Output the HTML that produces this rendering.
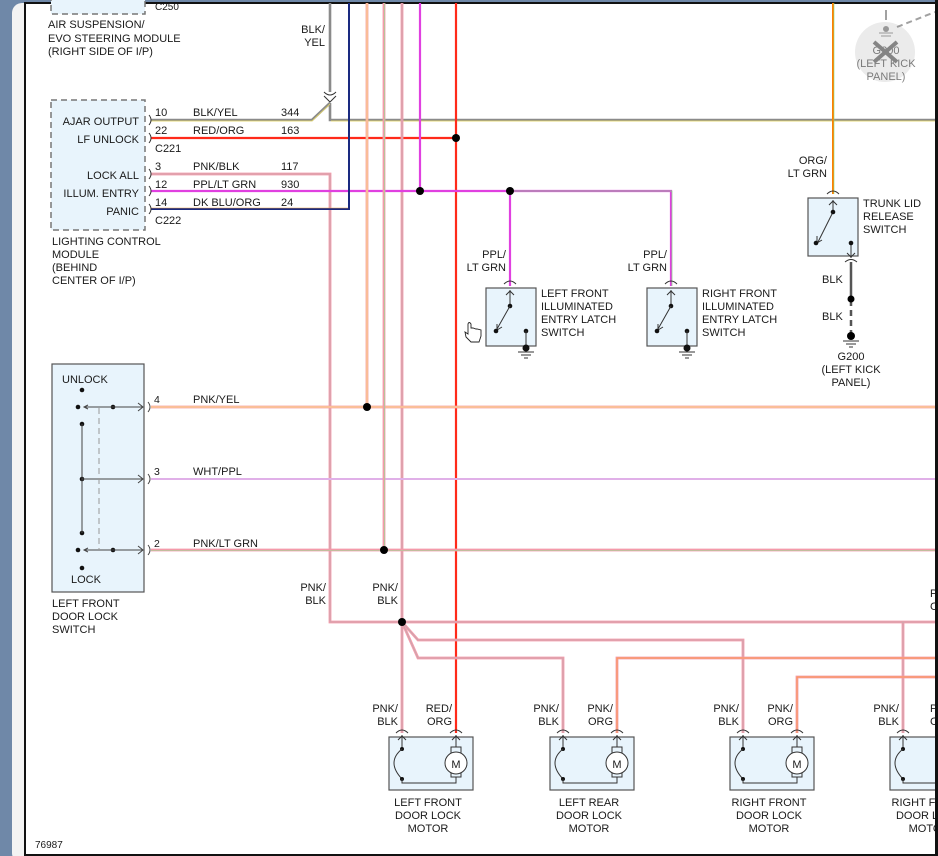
<!DOCTYPE html>
<html><head><meta charset="utf-8"><style>
html,body{margin:0;padding:0;width:938px;height:856px;overflow:hidden;background:#6f88a8;}
svg{position:absolute;left:0;top:0}
text{font-family:"Liberation Sans",Arial,sans-serif;font-size:11px;fill:#1a1a1a}
</style></head><body>
<svg width="938" height="856" viewBox="0 0 938 856" xmlns="http://www.w3.org/2000/svg">
<defs>
<g id="motor">
 <rect x="-13" y="0" width="84" height="53" fill="#e8f4fc" stroke="#555" stroke-width="1.2"/>
 <path d="M-6,-4 Q0,-10 6,-4 M48,-4 Q54,-10 60,-4" fill="none" stroke="#333"/>
 <path d="M0,12 L0,-2 M-4,3 L0,-1 L4,3" fill="none" stroke="#333"/>
 <circle cx="0" cy="12" r="2" fill="#111"/>
 <path d="M0,12 Q-16,25 0,42" fill="none" stroke="#333"/>
 <circle cx="0" cy="42" r="2" fill="#111"/>
 <path d="M0,42 L0,46 L54,46 L54,40" fill="none" stroke="#333"/>
 <path d="M54,10 L54,-2 M50,3 L54,-1 L58,3" fill="none" stroke="#333"/>
 <rect x="49" y="10" width="10" height="30" fill="none" stroke="#333"/>
 <circle cx="54" cy="26" r="11" fill="#fff" stroke="#333"/>
</g>
<g id="sw">
 <rect x="0" y="0" width="50" height="58" fill="#e8f4fc" stroke="#555" stroke-width="1.2"/>
 <path d="M18,-4 Q24,-10 30,-4" fill="none" stroke="#333"/>
 <path d="M24,18 L24,2 M20,7 L24,3 L28,7" fill="none" stroke="#333"/>
 <circle cx="24" cy="18" r="2.3" fill="#111"/>
 <path d="M24,18 L11,41 M11,36 L11,42 L16,39" fill="none" stroke="#333"/>
 <circle cx="10" cy="43" r="2.3" fill="#111"/>
 <circle cx="40" cy="43" r="2.3" fill="#111"/>
 <path d="M40,43 L40,60 M32,64 L48,64 M35,67 L45,67 M38,70 L42,70" fill="none" stroke="#333"/>
 <circle cx="40" cy="60" r="3.5" fill="#111"/>
</g>
</defs>
<rect x="12" y="3" width="930" height="860" rx="10" fill="#f3f3f3"/>
<rect x="25" y="3" width="911" height="852" fill="#fff" stroke="#111" stroke-width="2"/>
<rect x="0" y="0" width="938" height="2" fill="#6f88a8"/>

<rect x="51" y="-5" width="94" height="19" fill="#e8f4fc" stroke="#777" stroke-dasharray="6,4" stroke-width="1.5"/>
<text x="155" y="10" style="font-size:10px">C250</text>
<text x="48" y="28">AIR SUSPENSION/</text>
<text x="48" y="42">EVO STEERING MODULE</text>
<text x="48" y="55">(RIGHT SIDE OF I/P)</text>

<rect x="51" y="100" width="94" height="130" fill="#e8f4fc" stroke="#777" stroke-dasharray="6,4" stroke-width="1.5"/>
<g text-anchor="end">
<text x="139" y="125">AJAR OUTPUT</text>
<text x="139" y="143">LF UNLOCK</text>
<text x="139" y="179">LOCK ALL</text>
<text x="139" y="197">ILLUM. ENTRY</text>
<text x="139" y="215">PANIC</text>
</g>
<text x="52" y="245">LIGHTING CONTROL</text>
<text x="52" y="258">MODULE</text>
<text x="52" y="271">(BEHIND</text>
<text x="52" y="284">CENTER OF I/P)</text>
<g style="font-size:10.5px">
<text x="155" y="116">10</text><text x="193" y="116">BLK/YEL</text><text x="281" y="116">344</text>
<text x="155" y="134">22</text><text x="193" y="134">RED/ORG</text><text x="281" y="134">163</text>
<text x="155" y="152">C221</text>
<text x="155" y="170">3</text><text x="193" y="170">PNK/BLK</text><text x="281" y="170">117</text>
<text x="155" y="188">12</text><text x="193" y="188">PPL/LT GRN</text><text x="281" y="188">930</text>
<text x="155" y="206">14</text><text x="193" y="206">DK BLU/ORG</text><text x="281" y="206">24</text>
<text x="155" y="224">C222</text>
</g>
<text x="325" y="33" text-anchor="end">BLK/</text>
<text x="325" y="46" text-anchor="end">YEL</text>

<g fill="none" stroke-linejoin="miter">
 <path d="M151,120 L312,120 L330,103 M330,3 L330,92 M330,103 L330,120 L935,120" stroke="#8a8a8a" stroke-width="2.6"/>
 <path d="M151,121 L312,121 L330,104 M331,121 L935,121" stroke="#f0e060" stroke-width="0.7"/>
 <path d="M324,96 L330,102 L336,96 M324,92 Q330,98 336,92" stroke="#333" stroke-width="1"/>
 <path d="M151,138 L456,138 M456,3 L456,733" stroke="#ff2a1a" stroke-width="2.2"/>
 <path d="M151,174 L330,174 L330,622 L935,622 M402,3 L402,733 M402,622 L418,640 L743,640 L743,733 M402,622 L418,658 L563,658 L563,733 M903,622 L903,733" stroke="#f49aaa" stroke-width="2.8"/>
 <path d="M151,174 L330,174 L330,622 L935,622 M402,3 L402,733 M402,622 L418,640 L743,640 L743,733 M402,622 L418,658 L563,658 L563,733 M903,622 L903,733" stroke="#b0b0b0" stroke-width="0.6"/>
 <path d="M617,733 L617,658 L935,658 M797,733 L797,677 L935,677" stroke="#f49aaa" stroke-width="2.8"/>
 <path d="M617,733 L617,658 L935,658 M797,733 L797,677 L935,677" stroke="#ff9a30" stroke-width="0.7"/>
 <path d="M151,191 L671,191 L671,286 M420,3 L420,191 M510,191 L510,286" stroke="#e040e0" stroke-width="2.2"/>
 <path d="M511,191 L672,191 L672,286" stroke="#80e080" stroke-width="0.7"/>
 <path d="M151,209 L349,209 L349,3" stroke="#1a2a80" stroke-width="2"/>
 <path d="M151,208 L348,208" stroke="#f0a040" stroke-width="0.6"/>
 <path d="M151,407 L935,407 M367,3 L367,407" stroke="#f6a0a0" stroke-width="2.8"/>
 <path d="M151,407 L935,407 M367,3 L367,407" stroke="#fff08a" stroke-width="0.7"/>
 <path d="M151,479 L935,479" stroke="#e0b0e8" stroke-width="2"/>
 <path d="M151,550 L935,550 M384,3 L384,550" stroke="#f49aaa" stroke-width="2.8"/>
 <path d="M151,550.5 L935,550.5 M384.5,3 L384.5,550" stroke="#90e090" stroke-width="0.6"/>
 <path d="M833,3 L833,194" stroke="#ff8000" stroke-width="2"/>
 <path d="M834,3 L834,194" stroke="#80e080" stroke-width="0.6"/>
 <path d="M851,262 L851,299" stroke="#555" stroke-width="2.5"/>
 <path d="M851,300 L851,336" stroke="#555" stroke-width="2.5" stroke-dasharray="6,4"/>
</g>
<g fill="#000">
<circle cx="456" cy="138" r="4"/><circle cx="420" cy="191" r="4"/><circle cx="510" cy="191" r="4"/>
<circle cx="367" cy="407" r="4"/><circle cx="384" cy="550" r="4"/><circle cx="402" cy="622" r="4"/>
<circle cx="851" cy="299" r="3.5"/><circle cx="851" cy="336" r="4"/>
</g>
<path d="M843,341 L859,341 M846,344 L856,344 M849,347 L853,347" stroke="#333" fill="none"/>
<g fill="none" stroke="#333">
<path d="M149,115 Q153,120 149,125 M149,133 Q153,138 149,143 M149,169 Q153,174 149,179 M149,186 Q153,191 149,196 M149,204 Q153,209 149,214"/>
</g>

<rect x="52" y="364" width="92" height="228" fill="#e8f4fc" stroke="#555" stroke-width="1.2"/>
<text x="62" y="383">UNLOCK</text>
<text x="71" y="583">LOCK</text>
<g fill="#111"><circle cx="82" cy="390" r="2.3"/><circle cx="78" cy="407" r="2.3"/><circle cx="113" cy="407" r="2.3"/>
<circle cx="82" cy="424" r="2.3"/><circle cx="82" cy="479" r="2.3"/><circle cx="82" cy="533" r="2.3"/>
<circle cx="78" cy="550" r="2.3"/><circle cx="113" cy="550" r="2.3"/><circle cx="82" cy="568" r="2.3"/></g>
<g fill="none" stroke="#444">
<path d="M84,407 L143,407 M138,403 L143,407 L138,411 M88,405 L84,407 L88,409"/>
<path d="M84,550 L143,550 M138,546 L143,550 L138,554 M88,548 L84,550 L88,552"/>
<path d="M82,424 L82,533 M82,479 L143,479 M138,475 L143,479 L138,483"/>
<path d="M99,408 L99,550" stroke="#999" stroke-dasharray="6,4"/>
<path d="M148,402 Q152,407 148,412 M148,474 Q152,479 148,484 M148,545 Q152,550 148,555"/>
</g>
<text x="154" y="403" style="font-size:10.5px">4</text><text x="193" y="403">PNK/YEL</text>
<text x="154" y="475" style="font-size:10.5px">3</text><text x="193" y="475">WHT/PPL</text>
<text x="154" y="547" style="font-size:10.5px">2</text><text x="193" y="547">PNK/LT GRN</text>
<text x="52" y="607">LEFT FRONT</text><text x="52" y="620">DOOR LOCK</text><text x="52" y="633">SWITCH</text>
<g text-anchor="end">
<text x="326" y="591">PNK/</text><text x="326" y="604">BLK</text>
<text x="398" y="591">PNK/</text><text x="398" y="604">BLK</text>
</g>

<use href="#sw" x="486" y="288"/>
<use href="#sw" x="647" y="288"/>
<g text-anchor="end">
<text x="506" y="258">PPL/</text><text x="506" y="271">LT GRN</text>
<text x="667" y="258">PPL/</text><text x="667" y="271">LT GRN</text>
<text x="827" y="164">ORG/</text><text x="827" y="177">LT GRN</text>
</g>
<text x="541" y="297">LEFT FRONT</text><text x="541" y="310">ILLUMINATED</text><text x="541" y="323">ENTRY LATCH</text><text x="541" y="336">SWITCH</text>
<text x="702" y="297">RIGHT FRONT</text><text x="702" y="310">ILLUMINATED</text><text x="702" y="323">ENTRY LATCH</text><text x="702" y="336">SWITCH</text>
<path d="M468,324 L468,334 L465,332 L466,337 L471,342 L479,342 L481,336 L481,330 L477,329 L476,329 L473,328 L471,328 L471,324 Q469,321 468,324 Z" fill="#fff" stroke="#222" stroke-width="0.9"/>

<rect x="808" y="198" width="50" height="58" fill="#e8f4fc" stroke="#555" stroke-width="1.2"/>
<g fill="none" stroke="#333">
<path d="M827,194 Q833,188 839,194"/>
<path d="M833,212 L833,200 M829,205 L833,201 L837,205"/>
<path d="M833,212 L818,242 M817,236 L817,243 L822,240"/>
<path d="M851,243 L851,258 M847,253 L851,257 L855,253 M845,262 Q851,257 857,262"/>
</g>
<g fill="#111"><circle cx="833" cy="212" r="2.3"/><circle cx="816" cy="243" r="2.3"/><circle cx="851" cy="243" r="2.3"/></g>
<text x="863" y="207">TRUNK LID</text><text x="863" y="220">RELEASE</text><text x="863" y="233">SWITCH</text>
<text x="822" y="283">BLK</text><text x="822" y="320">BLK</text>
<g text-anchor="middle"><text x="851" y="360">G200</text><text x="851" y="373">(LEFT KICK</text><text x="851" y="386">PANEL)</text></g>

<circle cx="885" cy="52" r="30" fill="#ebebeb"/>
<g opacity="0.55">
<path d="M886,10 L886,20" stroke="#555" stroke-width="2"/>
<path d="M897,27 L935,12" stroke="#555" stroke-width="2" stroke-dasharray="6,4"/>
<circle cx="886" cy="29" r="3" fill="#555"/>
<path d="M879,33 L893,33 M881,36 L891,36" stroke="#555"/>
<g text-anchor="middle"><text x="886" y="54">G200</text><text x="886" y="67">(LEFT KICK</text><text x="886" y="80">PANEL)</text></g>
<path d="M874,42 L897,62 M897,42 L874,62" stroke="#333" stroke-width="4"/>
</g>

<use href="#motor" x="402" y="737"/>
<use href="#motor" x="563" y="737"/>
<use href="#motor" x="743" y="737"/>
<use href="#motor" x="903" y="737"/>
<g text-anchor="middle" style="font-size:12px">
<text x="456" y="768">M</text><text x="617" y="768">M</text><text x="797" y="768">M</text>
</g>
<g text-anchor="end">
<text x="398" y="712">PNK/</text><text x="398" y="725">BLK</text>
<text x="452" y="712">RED/</text><text x="452" y="725">ORG</text>
<text x="559" y="712">PNK/</text><text x="559" y="725">BLK</text>
<text x="613" y="712">PNK/</text><text x="613" y="725">ORG</text>
<text x="739" y="712">PNK/</text><text x="739" y="725">BLK</text>
<text x="793" y="712">PNK/</text><text x="793" y="725">ORG</text>
<text x="899" y="712">PNK/</text><text x="899" y="725">BLK</text>
</g>
<text x="930" y="597">P</text><text x="930" y="610">C</text>
<text x="930" y="712">P</text><text x="930" y="725">C</text>
<g text-anchor="middle">
<text x="428" y="806">LEFT FRONT</text><text x="428" y="819">DOOR LOCK</text><text x="428" y="832">MOTOR</text>
<text x="589" y="806">LEFT REAR</text><text x="589" y="819">DOOR LOCK</text><text x="589" y="832">MOTOR</text>
<text x="769" y="806">RIGHT FRONT</text><text x="769" y="819">DOOR LOCK</text><text x="769" y="832">MOTOR</text>
<text x="929" y="806">RIGHT FRONT</text><text x="929" y="819">DOOR LOCK</text><text x="929" y="832">MOTOR</text>
</g>
<text x="35" y="848" style="font-size:10px">76987</text>
<rect x="935" y="0" width="3" height="856" fill="#111"/>
<rect x="25" y="854" width="913" height="2" fill="#111"/>
</svg>
</body></html>
